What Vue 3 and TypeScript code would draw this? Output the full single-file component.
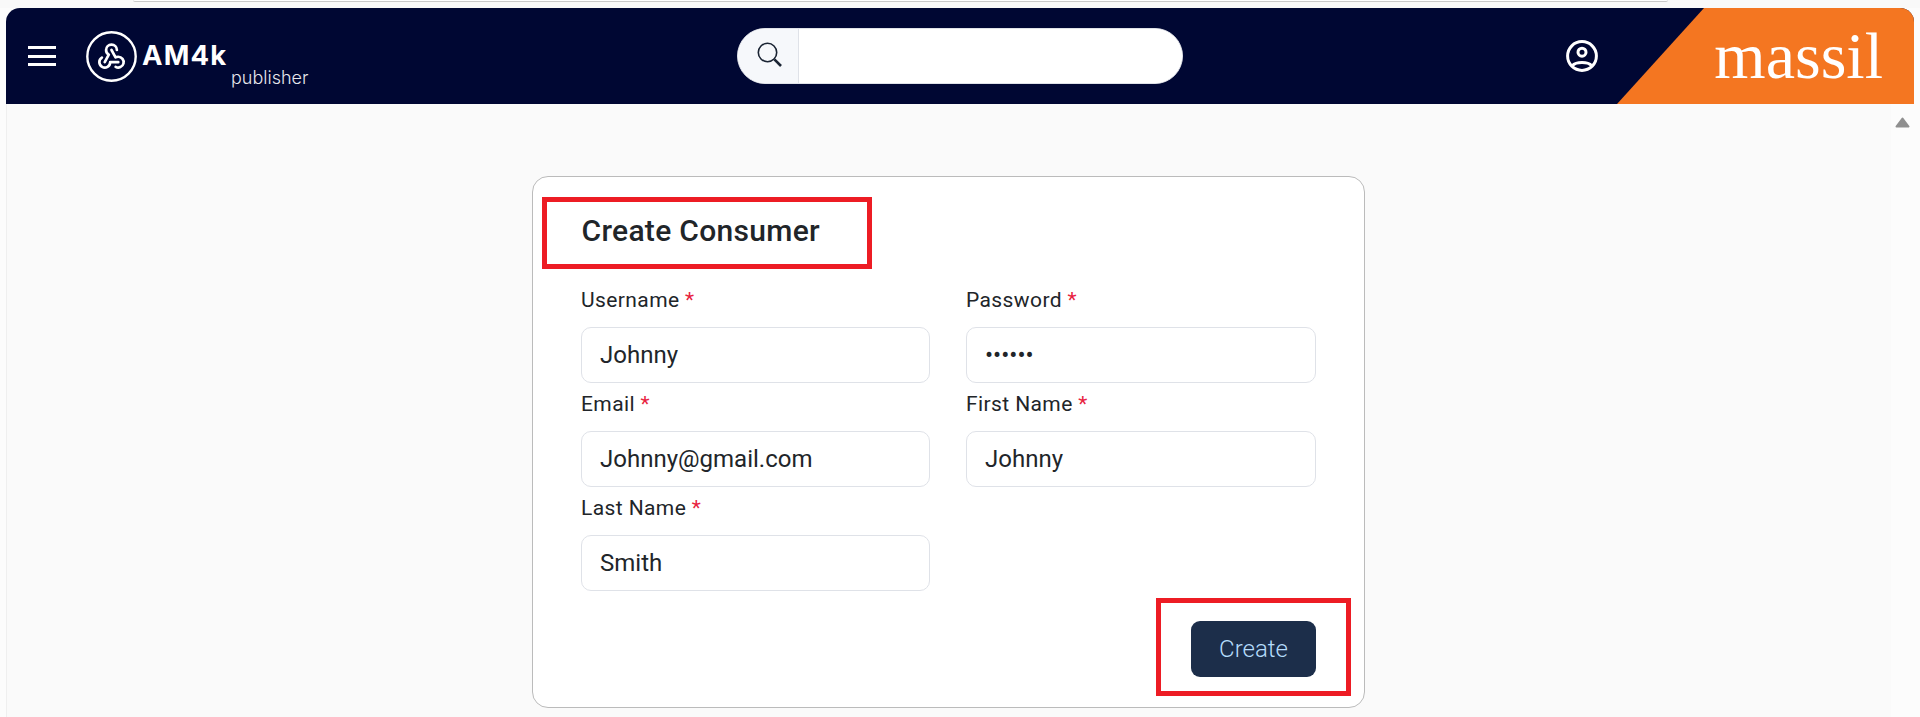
<script setup lang="ts">
interface Field { label: string; value: string; type?: string }
const fields: Field[] = [
  { label: 'Username', value: 'Johnny' },
  { label: 'Password', value: 'secret', type: 'password' },
  { label: 'Email', value: 'Johnny@gmail.com' },
  { label: 'First Name', value: 'Johnny' },
  { label: 'Last Name', value: 'Smith' },
]
</script>

<template>
  <div class="page">
    <div class="chrome"><div class="chrome-tab"></div></div>
    <header class="header">
      <button class="menu" aria-label="Menu"><span></span><span></span><span></span></button>
      <div class="logo">
        <svg class="logo-mark" viewBox="0 0 51 51" width="51" height="51" fill="none" stroke="#fff">
          <circle cx="25.5" cy="25.5" r="24.2" stroke-width="2.4" />
          <g transform="translate(9.3 8.2) scale(1.35)" stroke-width="2" stroke-linecap="round" stroke-linejoin="round">
            <path d="M4.876 13.61a4 4 0 1 0 6.124 3.39h6" />
            <path d="M15.066 20.502a4 4 0 1 0 1.934 -7.502c-.706 0 -1.424 .179 -2 .5l-3 -5.5" />
            <path d="M16 8a4 4 0 1 0 -8 0c0 1.506 .77 2.818 2 3.5l-3 5.5" />
          </g>
        </svg>
        <div class="logo-text">
          <span class="logo-name">AM4k</span>
          <span class="logo-sub">publisher</span>
        </div>
      </div>
      <div class="search">
        <span class="search-addon">
          <svg viewBox="0 0 26 26" width="26" height="26" fill="none" stroke="#1a2433">
            <circle cx="10.5" cy="10.5" r="9.2" stroke-width="1.6" />
            <path d="M17.4 17.4 24 24" stroke-width="2.6" />
          </svg>
        </span>
        <input class="search-input" type="text" aria-label="Search" />
      </div>
      <button class="user" aria-label="Account">
        <svg viewBox="0 0 32 32" width="32" height="32" fill="none" stroke="#fff" stroke-width="3">
          <circle cx="16" cy="16" r="14.4" />
          <circle cx="16" cy="12.2" r="4" />
          <path d="M6.5 25.5C10 21.5 22 21.5 25.5 25.5" />
        </svg>
      </button>
      <div class="brand"><span>massil</span></div>
    </header>
    <main class="main">
      <span class="scroll-track">
        <svg viewBox="0 0 15 11" width="15" height="11" fill="#8f8f8f" stroke="#8f8f8f" stroke-width="2" stroke-linejoin="round">
          <path d="M7.5 1.5 13.5 9.5H1.5Z" />
        </svg>
      </span>
      <section class="card">
        <h1 class="title">Create Consumer</h1>
        <form class="form" @submit.prevent>
          <label v-for="f in fields" :key="f.label" class="field">
            <span class="label">{{ f.label }} <em>*</em></span>
            <input class="input" :type="f.type ?? 'text'" :value="f.value" />
          </label>
        </form>
        <div class="actions"><button class="create" type="button">Create</button></div>
        <span class="mark mark-title"></span>
        <span class="mark mark-button"></span>
      </section>
    </main>
  </div>
</template>

<style>
html, body { margin: 0; background: #fafafa; }
</style>

<style scoped>
* { box-sizing: border-box; }
.page {
  height: 717px;
  overflow: hidden;
  font-family: Roboto, "Liberation Sans", sans-serif;
  background: #fcfcfc;
  display: flex;
  flex-direction: column;
}
.chrome { height: 8px; flex: none; padding-left: 133px; background: #f9f9f9; }
.chrome-tab {
  width: 1535px;
  height: 2px;
  background: #fff;
  border-bottom: 1px solid #c9c9c9;
  border-radius: 0 0 8px 8px;
}
.header {
  flex: none;
  height: 96px;
  margin: 0 6px;
  background: #000733;
  border-radius: 14px 14px 0 0;
  display: flex;
  align-items: center;
  position: relative;
  overflow: hidden;
}
.menu {
  width: 28px;
  height: 20px;
  margin: 0 0 0 22px;
  padding: 0;
  border: 0;
  background: none;
  display: flex;
  flex-direction: column;
  justify-content: space-between;
}
.menu span { display: block; height: 3px; background: #fff; }
.logo { display: flex; align-items: flex-start; margin-left: 30px; width: 300px; height: 51px; }
.logo-mark { flex: none; }
.logo-text { display: flex; flex-direction: column; margin-left: 5px; }
.logo-name {
  font: 700 27.5px/28px Inter, "Open Sans", sans-serif;
  letter-spacing: 1.2px;
  color: #fff;
  margin-top: 10px;
}
.logo-sub {
  font: 300 18px/20px Inter, "Open Sans", sans-serif;
  color: #e6e6ec;
  margin: -1px 0 0 89px;
  width: 90px;
}
.search {
  width: 446px;
  height: 56px;
  margin-left: 351px;
  flex: none;
  border: 1px solid #dfe2e8;
  border-radius: 28px;
  background: #fff;
  display: flex;
  overflow: hidden;
}
.search-addon {
  width: 61px;
  background: #f6f8fb;
  border-right: 1px solid #dfe2e8;
  display: flex;
  align-items: center;
  justify-content: center;
  padding-left: 4px;
  padding-bottom: 2px;
}
.search-input { flex: 1; border: 0; outline: 0; min-width: 0; background: #fff; }
.user {
  margin-left: 383px;
  width: 32px;
  height: 32px;
  padding: 0;
  border: 0;
  background: none;
  flex: none;
}
.brand {
  position: absolute;
  right: 0;
  top: 0;
  bottom: 0;
  width: 297px;
  background: #f47621;
  clip-path: polygon(87px 0, 100% 0, 100% 100%, 0 100%);
  display: flex;
  justify-content: flex-end;
  align-items: center;
  padding-right: 31px;
}
.brand span {
  font: 400 66px/1 "Liberation Serif", serif;
  color: #fff;
}
.main {
  flex: 1;
  margin: 0 6px;
  background: #fafafa;
  border-left: 1px solid #efefef;
  padding-top: 72px;
  position: relative;
}
.scroll-track {
  position: absolute;
  top: 0;
  right: 0;
  bottom: 0;
  width: 23px;
  background: #fcfcfc;
  display: flex;
  justify-content: center;
  padding-top: 13px;
  padding-right: 1px;
}
.scroll-track svg { display: block; }
.card {
  width: 833px;
  height: 532px;
  margin-left: 525px;
  background: #fff;
  border: 1px solid #bbb;
  border-radius: 16px;
  padding: 33px 48px 0;
  position: relative;
}
.title {
  margin: 0 0 0 .5px;
  font: 500 30px/42px Roboto, sans-serif;
  letter-spacing: .3px;
  color: #212529;
  height: 69px;
}
.form {
  display: grid;
  grid-template-columns: 349px 350px;
  column-gap: 36px;
  grid-auto-rows: 104px;
}
.field { display: flex; flex-direction: column; }
.label {
  font: 400 21px/24px Roboto, sans-serif;
  letter-spacing: .4px;
  color: #212529;
  height: 48px;
  padding-top: 9px;
}
.label em { color: #e8233f; font-style: normal; }
.input {
  height: 56px;
  border: 1px solid #dfe2e8;
  border-radius: 10px;
  padding: 0 18px;
  font: 400 24px/1 Roboto, sans-serif;
  color: #212529;
  outline: 0;
  background: #fff;
}
.actions { display: flex; justify-content: flex-end; margin-top: 30px; }
.create {
  width: 125px;
  height: 56px;
  border: 0;
  border-radius: 9px;
  background: #1c2e4a;
  color: #b5dcfb;
  font: 300 24px/1 Roboto, sans-serif;
}
.mark { position: absolute; border: 5px solid #ed1c24; pointer-events: none; }
.mark-title { left: 9px; top: 20px; width: 330px; height: 72px; }
.mark-button { left: 623px; top: 421px; width: 195px; height: 98px; }
</style>
